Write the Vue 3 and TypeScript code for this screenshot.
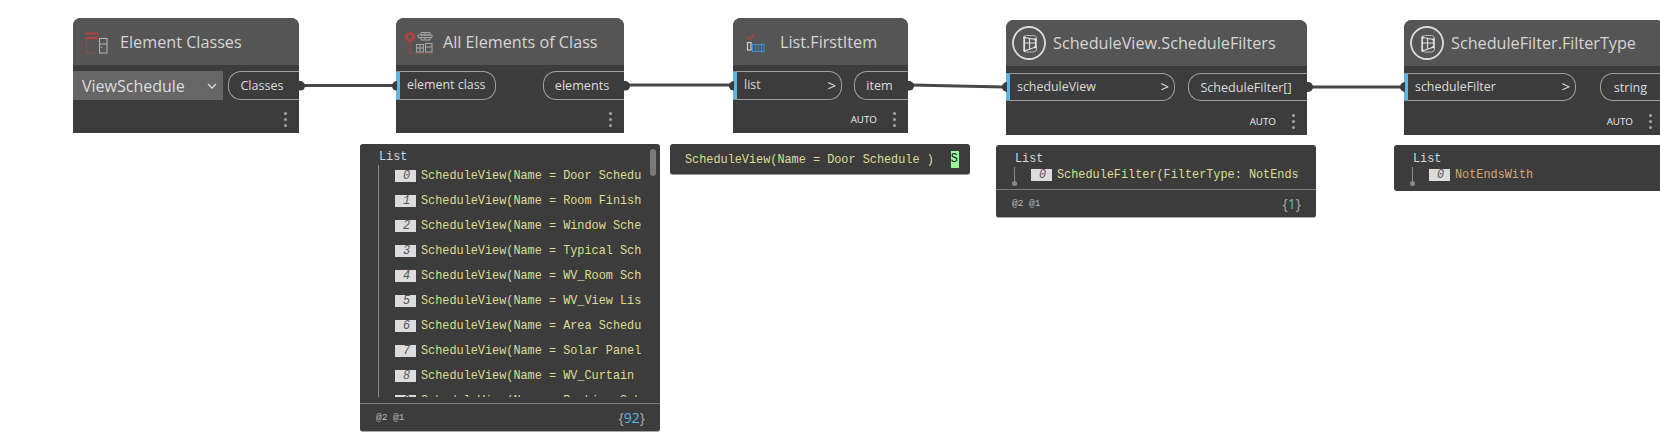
<template>
  <div class="canvas">
    <svg class="wires" width="1660" height="442">
      <path v-for="(w, i) in wires" :key="i" :d="w" />
    </svg>

    <div
      v-for="n in nodes"
      :key="n.title"
      class="node"
      :class="{ method: n.icon === 'view' }"
      :style="{ left: n.x + 'px', top: n.y + 'px', width: n.w + 'px' }"
    >
      <div class="node-head">
        <svg class="icon" width="46" height="46" viewBox="0 0 46 46" fill="none">
          <g v-if="n.icon === 'classes'">
            <path d="M12 14.5h13M12 19h13" stroke="#b5403f" stroke-width="2" />
            <path d="M13.5 20v14h12" stroke="#a84a48" stroke-dasharray="1.5 1" />
            <rect x="26.5" y="19.5" width="7.5" height="14.5" stroke="#b8b8b8" />
            <path d="M26.5 25h7.500" stroke="#b8b8b8" />
            <rect x="28" y="28" width="1" height="1" fill="#b8b8b8" />
          </g>
          <g v-else-if="n.icon === 'all'">
            <circle cx="14" cy="18" r="3.400" stroke="#b5403f" stroke-width="2.400" />
            <circle cx="14" cy="18" r="5.200" stroke="#b5403f" stroke-width="1" stroke-dasharray="2 2" />
            <path d="M14 23v11" stroke="#b5403f" />
            <path d="M14 34.500h23" stroke="#a84a48" stroke-dasharray="1.5 1" />
            <path d="M25 13.500h9v2.500h-9zM22 16h14v2.500H22zM25 18.500h9V21h-9zM29 13.500V16M29 18.500V21" stroke="#a8a8a8" />
            <rect x="20.500" y="25.500" width="7" height="7.500" stroke="#a8a8a8" />
            <path d="M24 25.500V33M20.500 29h7" stroke="#a8a8a8" />
            <rect x="29.500" y="24.500" width="6.500" height="8.500" stroke="#a8a8a8" />
            <path d="M29.500 28h6.500" stroke="#a8a8a8" />
          </g>
          <g v-else-if="n.icon === 'first'">
            <path d="M14 18l2.500 2 4.500-4.500" stroke="#a8433f" stroke-width="1.800" />
            <rect x="14.500" y="23.500" width="3.500" height="7.500" stroke="#d0d0d0" stroke-width="1.200" />
            <rect x="19.500" y="25.500" width="11.500" height="7" stroke="#3f86c4" stroke-width="1.200" />
            <path d="M22.500 25.500v7M25.500 25.500v7M28.500 25.500v7" stroke="#3f86c4" />
          </g>
          <g v-else>
            <circle cx="23" cy="23" r="16" stroke="#dcdcdc" stroke-width="1.800" />
            <rect x="17.500" y="15.500" width="13" height="16.500" rx="3" stroke="#b8b8b8" />
            <path d="M18.500 17.500l11 2v7.500l-11 4zM23.500 18.500v10M18.500 23h11" stroke="#e0e0e0" stroke-width="1.100" />
            <circle cx="18.500" cy="17.500" r="1.300" fill="#e0e0e0" />
            <circle cx="29.500" cy="19.500" r="1.300" fill="#e0e0e0" />
            <circle cx="18.500" cy="30.500" r="1.300" fill="#e0e0e0" />
            <circle cx="29.500" cy="27" r="1.300" fill="#e0e0e0" />
          </g>
        </svg>
        <span class="title">{{ n.title }}</span>
      </div>

      <div class="node-row">
        <div v-if="n.dropdown" class="dropdown">
          <span>{{ n.dropdown }}</span>
          <svg width="10" height="6" viewBox="0 0 10 6" fill="none">
            <path d="M1 1l4 4 4-4" stroke="#ddd" stroke-width="1.300" />
          </svg>
        </div>
        <div v-else class="in-pill" :style="{ width: n.inW + 'px' }">
          <i class="port port-in"></i>
          <span>{{ n.input }}</span>
          <b v-if="n.chevron">&gt;</b>
        </div>
        <div class="out-pill" :style="{ width: n.outW + 'px' }">{{ n.output }}</div>
        <i class="port port-out"></i>
      </div>

      <div class="node-foot">
        <span v-if="n.auto" class="auto">AUTO</span>
        <span class="dots"><i></i><i></i><i></i></span>
      </div>
    </div>

    <div
      v-for="b in bubbles"
      :key="b.x"
      class="bubble"
      :class="{ compact: b.rows.length === 1, footed: b.count }"
      :style="{ left: b.x + 'px', top: b.y + 'px', width: b.w + 'px', height: b.h + 'px' }"
    >
      <div class="bubble-main">
        <div class="list-label">List</div>
        <div class="tree">
          <div v-for="(r, i) in b.rows" :key="i" class="row">
            <span class="idx">{{ i }}</span>
            <span class="val" :class="{ str: b.str }" :style="{ width: b.valW + 'px' }">{{ r }}</span>
          </div>
        </div>
        <div v-if="b.scroll" class="scroll"></div>
      </div>
      <div v-if="b.count" class="bubble-foot">
        <span>@2 @1</span>
        <span class="count">{<em>{{ b.count }}</em>}</span>
      </div>
    </div>

    <div class="bubble single">
      <span class="val">ScheduleView(Name = Door Schedule )</span>
      <mark>S</mark>
    </div>
  </div>
</template>

<script setup lang="ts">
interface GraphNode {
  title: string;
  icon: string;
  x: number;
  y: number;
  w: number;
  input?: string;
  inW?: number;
  dropdown?: string;
  chevron?: boolean;
  output: string;
  outW: number;
  auto?: boolean;
}

const nodes: GraphNode[] = [
  { title: "Element Classes", icon: "classes", x: 73, y: 18, w: 226, dropdown: "ViewSchedule", output: "Classes", outW: 71 },
  { title: "All Elements of Class", icon: "all", x: 396, y: 18, w: 228, input: "element class", inW: 100, output: "elements", outW: 81 },
  { title: "List.FirstItem", icon: "first", x: 733, y: 18, w: 175, input: "list", inW: 109, chevron: true, output: "item", outW: 54, auto: true },
  { title: "ScheduleView.ScheduleFilters", icon: "view", x: 1006, y: 20, w: 301, input: "scheduleView", inW: 169, chevron: true, output: "ScheduleFilter[]", outW: 119, auto: true },
  { title: "ScheduleFilter.FilterType", icon: "view", x: 1404, y: 20, w: 260, input: "scheduleFilter", inW: 172, chevron: true, output: "string", outW: 64, auto: true },
];

const wires = [
  "M302 85.500H394",
  "M627 85H731",
  "M911 85C940 85.500 975 86.500 1004 87",
  "M1310 87H1402",
];

const names = ["Door Schedule", "Room Finish Schedule", "Window Schedule", "Typical Schedule", "WV_Room Schedule", "WV_View List", "Area Schedule", "Solar Panel Schedule", "WV_Curtain Wall", "Parking Schedule"];

const bubbles = [
  { x: 360, y: 144, w: 300, h: 288, valW: 220.4, rows: names.map((n) => `ScheduleView(Name = ${n} )`), scroll: true, count: "92", str: false },
  { x: 996, y: 145, w: 320, h: 73, valW: 242, rows: ["ScheduleFilter(FilterType: NotEndsWith)"], scroll: false, count: "1", str: false },
  { x: 1394, y: 145, w: 300, h: 46, valW: 200, rows: ["NotEndsWith"], scroll: false, count: "", str: true },
];
</script>

<style scoped>
.canvas {
  position: relative;
  width: 1660px;
  height: 442px;
  overflow: hidden;
  background: #fff;
  font-family: "Open Sans", "Noto Sans", sans-serif;
}

.wires {
  position: absolute;
  left: 0;
  top: 0;
}

.wires path {
  fill: none;
  stroke: #474747;
  stroke-width: 2.800;
}

.node {
  position: absolute;
  height: 115px;
  display: flex;
  flex-direction: column;
  background: #3c3c3c;
  border-radius: 8px 8px 0 0;
  color: #dcdcdc;
}

.node-head {
  flex: 0 0 47px;
  display: flex;
  align-items: center;
  background: #555;
  border-radius: 8px 8px 0 0;
}

.method .node-head {
  flex-basis: 46px;
}

.icon {
  flex: 0 0 46px;
  margin-right: 1px;
}

.title {
  font-size: 16.200px;
  color: #d6d6d6;
  white-space: nowrap;
}

.node-row {
  position: relative;
  display: flex;
  justify-content: space-between;
  height: 29px;
  margin-top: 6px;
  font-size: 12.600px;
  white-space: nowrap;
}

.method .node-row {
  height: 28px;
  margin-top: 7px;
}

.dropdown {
  width: 150px;
  display: flex;
  align-items: center;
  justify-content: space-between;
  box-sizing: border-box;
  padding: 0 6px 0 9px;
  background: #666;
  font-size: 16px;
  color: #ddd;
}

.in-pill {
  position: relative;
  display: flex;
  align-items: center;
  justify-content: space-between;
  box-sizing: border-box;
  padding: 0 5px 2px 7px;
  border: 1px solid #a0a0a0;
  border-left: 4px solid #5eb4e2;
  border-radius: 0 13px 13px 0;
  font-size: 12.400px;
}

.in-pill b {
  font-weight: 400;
  font-size: 15px;
}

.out-pill {
  display: flex;
  align-items: center;
  justify-content: center;
  box-sizing: border-box;
  padding-right: 4px;
  border: 1px solid #a0a0a0;
  border-right: 0;
  border-radius: 13px 0 0 13px;
}

/* connector nubs hang off the node edge */
.port {
  position: absolute;
  top: 50%;
  width: 10px;
  height: 10px;
  margin-top: -5px;
  background: #3c3c3c;
  border-radius: 50%;
}

.port-in {
  left: -8px;
  clip-path: inset(0 50% 0 0);
}

.port-out {
  right: -6px;
  clip-path: inset(0 0 0 40%);
}

.node-foot {
  margin-top: auto;
  height: 28px;
  display: flex;
  align-items: center;
  justify-content: flex-end;
  padding-right: 12px;
  gap: 16px;
}

.auto {
  font-size: 9.800px;
  font-weight: 500;
  color: #eee;
}

.dots {
  display: flex;
  flex-direction: column;
  gap: 3px;
}

.dots i {
  display: block;
  width: 3px;
  height: 3px;
  border-radius: 50%;
  background: #a6a6a6;
}

.bubble {
  position: absolute;
  display: flex;
  flex-direction: column;
  box-sizing: border-box;
  background: #3c3c3c;
  border-radius: 3px;
  color: #ccc;
  font-family: "Liberation Mono", monospace;
  font-size: 11.850px;
}

.bubble.footed {
  border-bottom: 1px solid #a8a8a8;
}

.bubble-main {
  position: relative;
  flex: 1;
  min-height: 0;
  display: flex;
  flex-direction: column;
  padding: 6px 0 6px 19px;
}

.compact .bubble-main {
  padding-top: 7px;
}

.list-label {
  line-height: 15px;
  color: #d8d8d8;
}

.tree {
  position: relative;
  flex: 1;
  min-height: 0;
  margin-left: -1px;
  overflow: hidden;
  display: flex;
  flex-direction: column;
  gap: 11px;
  padding: 4px 0 0 16px;
  border-left: 1px solid #8a8a8a;
}

.compact .tree {
  flex: 0 0 16px;
  overflow: visible;
  padding-top: 1px;
}

.compact .tree::after {
  content: "";
  position: absolute;
  left: -3px;
  bottom: -2px;
  width: 5px;
  height: 5px;
  border-radius: 50%;
  background: #8a8a8a;
}

.row {
  flex: 0 0 14px;
  display: flex;
  align-items: center;
  gap: 5px;
}

.idx {
  flex: 0 0 21px;
  height: 12px;
  box-sizing: border-box;
  padding-right: 6px;
  background: #dcdcdc;
  color: #555;
  font-style: italic;
  line-height: 12px;
  text-align: right;
}

.val {
  overflow: hidden;
  white-space: pre;
  line-height: 14px;
  color: #dede93;
}

.val.str {
  color: #d9a673;
}

.scroll {
  position: absolute;
  top: 5px;
  right: 4px;
  width: 6px;
  height: 27px;
  border-radius: 3px;
  background: #7a7a7a;
}

.bubble-foot {
  flex: 0 0 28px;
  display: flex;
  align-items: center;
  justify-content: space-between;
  box-sizing: border-box;
  padding: 0 15px 0 16px;
  border-top: 1px solid #7c7c7c;
  font-size: 9.500px;
  color: #b8b8b8;
}

.count {
  font-family: "Open Sans", sans-serif;
  font-size: 14px;
  color: #aaa;
}

.count em {
  font-style: normal;
  color: #5eb4e2;
}

.single {
  left: 670px;
  top: 144px;
  width: 300px;
  height: 31px;
  flex-direction: row;
  align-items: center;
  padding: 2px 0 0 15px;
  gap: 17px;
  border-bottom: 1px solid #999;
}

.single mark {
  flex: 0 0 8px;
  height: 17px;
  margin-top: -1px;
  overflow: hidden;
  background: #98fb98;
  color: #111;
  line-height: 17px;
}
</style>

<style>
html,
body {
  margin: 0;
  background: #fff;
}
</style>
